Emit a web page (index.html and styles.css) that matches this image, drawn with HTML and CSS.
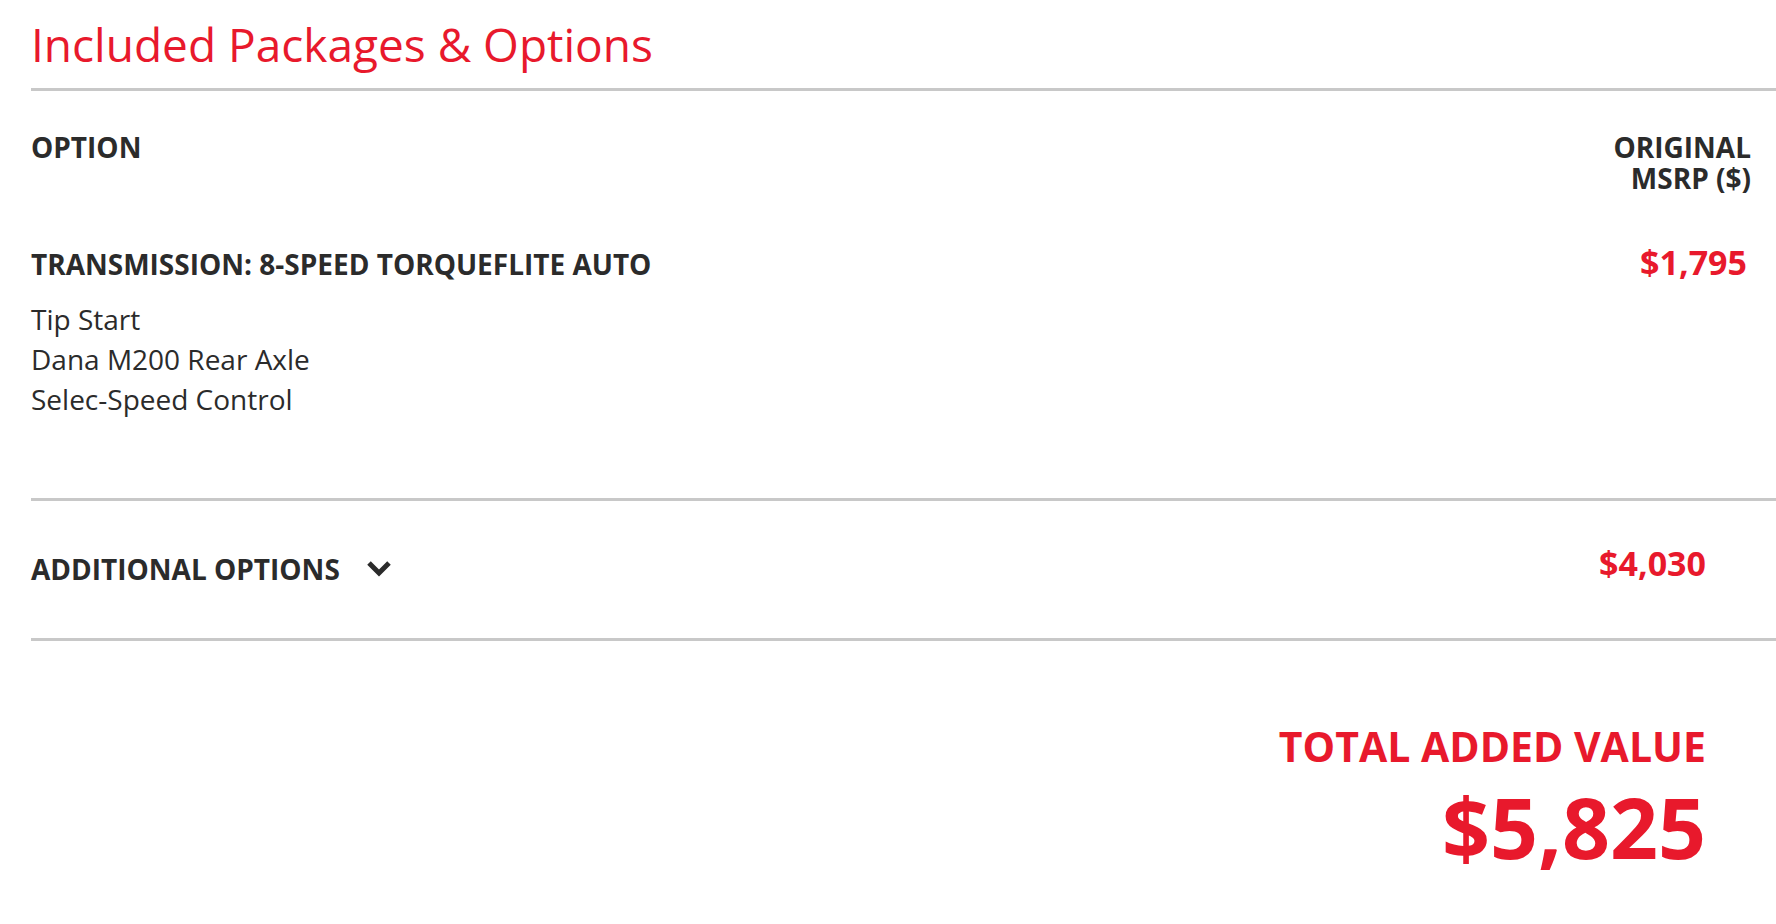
FILE: index.html
```html
<!DOCTYPE html>
<html lang="en">
<head>
    <meta charset="UTF-8">
    <meta name="viewport" content="width=device-width, initial-scale=1.0">
    <title>Included Packages &amp; Options</title>
    <link rel="stylesheet" href="styles.css">
</head>
<body>
    <div class="page">
        <h2 class="title">Included Packages &amp; Options</h2>

        <div class="options-table">
            <div class="table-head">
                <div class="col-label">OPTION</div>
                <div class="col-msrp">ORIGINAL<br>MSRP ($)</div>
            </div>

            <div class="package">
                <div class="package-info">
                    <div class="package-name">TRANSMISSION: 8-SPEED TORQUEFLITE AUTO</div>
                    <ul class="package-items">
                        <li>Tip Start</li>
                        <li>Dana M200 Rear Axle</li>
                        <li>Selec-Speed Control</li>
                    </ul>
                </div>
                <div class="price">$1,795</div>
            </div>
        </div>

        <div class="additional">
            <button class="additional-toggle" type="button">
                ADDITIONAL OPTIONS
                <svg class="chevron" width="26" height="18" viewBox="0 0 26 18">
                    <polyline points="3,3 13,13 23,3" fill="none" stroke="#2b2b2b" stroke-width="5"/>
                </svg>
            </button>
            <div class="price price-additional">$4,030</div>
        </div>

        <div class="total">
            <div class="total-label">TOTAL ADDED VALUE</div>
            <div class="total-value">$5,825</div>
        </div>
    </div>
</body>
</html>
```

FILE: styles.css
```css
body {
    margin: 0;
    font-family: "Open Sans", "Liberation Sans", sans-serif;
    color: #2b2b2b;
    background: #fff;
}
.page {
    padding-left: 31px;
}
.title {
    margin: 17px 0 0;
    font-size: 46px;
    line-height: 55px;
    font-weight: 400;
    color: #e8192c;
    padding-bottom: 16px;
    border-bottom: 3px solid #c8c8c8;
}
.table-head {
    display: flex;
    justify-content: space-between;
    padding: 41px 25px 0 0;
    font-size: 28px;
    line-height: 30px;
    font-weight: 700;
}
.col-msrp {
    text-align: right;
    line-height: 31px;
}
.package {
    display: flex;
    justify-content: space-between;
    align-items: baseline;
    padding: 45px 29px 79px 0;
    border-bottom: 3px solid #c8c8c8;
}
.package-name {
    font-size: 28px;
    line-height: 30px;
    font-weight: 700;
}
.package-items {
    list-style: none;
    margin: 20px 0 0;
    padding: 0;
    font-size: 28px;
    line-height: 40px;
}
.price {
    font-size: 34px;
    font-weight: 700;
    color: #e8192c;
}
.additional {
    display: flex;
    justify-content: space-between;
    align-items: center;
    padding: 53px 70px 54px 0;
    border-bottom: 3px solid #c8c8c8;
}
.additional-toggle {
    display: flex;
    align-items: center;
    gap: 26px;
    padding: 0;
    border: 0;
    background: none;
    font-family: inherit;
    font-size: 28px;
    line-height: 30px;
    font-weight: 700;
    color: #2b2b2b;
}
.price-additional {
    line-height: 30px;
    margin-top: -12px;
}
.total {
    padding: 81px 70px 40px 0;
    text-align: right;
    color: #e8192c;
    font-weight: 700;
}
.total-label {
    font-size: 41px;
    line-height: 48px;
}
.total-value {
    margin-top: 15px;
    font-size: 84px;
    line-height: 84px;
}
```
